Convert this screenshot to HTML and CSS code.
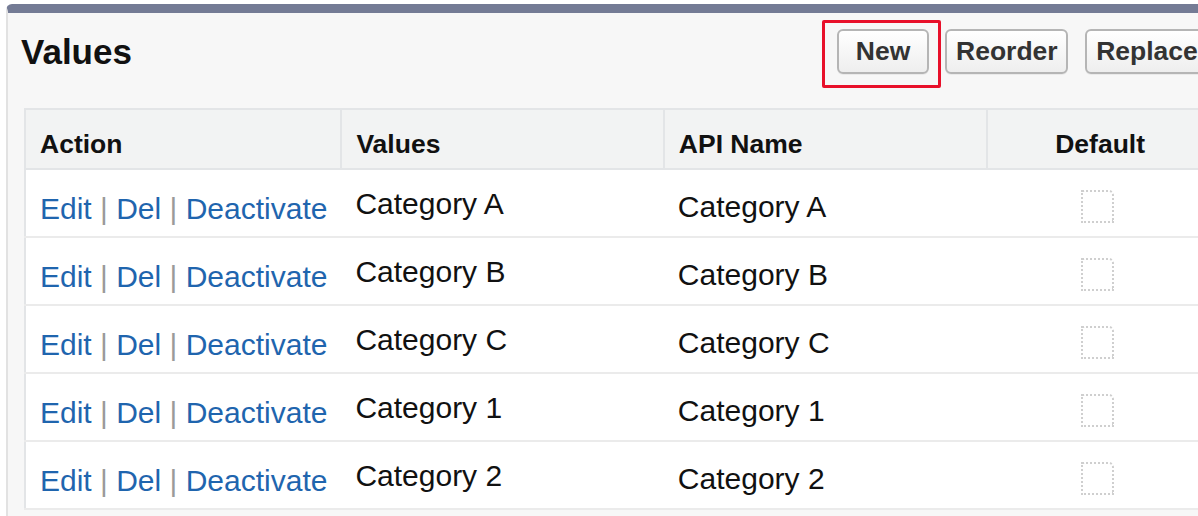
FILE: index.html
```html
<!DOCTYPE html>
<html lang="en">
<head>
<meta charset="utf-8">
<title>Values</title>
<link rel="stylesheet" href="styles.css">
</head>
<body>
<div class="panel">
  <div class="panel-header">
    <h2 class="title">Values</h2>
    <div class="buttons">
      <span class="highlight"><button class="btn btn-new" type="button">New</button></span>
      <button class="btn btn-reorder" type="button">Reorder</button>
      <button class="btn btn-replace" type="button">Replace</button>
    </div>
  </div>
  <table class="values-table">
    <thead>
      <tr>
        <th class="col-action">Action</th>
        <th class="col-values">Values</th>
        <th class="col-api">API Name</th>
        <th class="col-default">Default</th>
      </tr>
    </thead>
    <tbody>
      <tr>
        <td class="cell-action"><a href="#">Edit</a> <span class="sep">|</span> <a href="#">Del</a> <span class="sep">|</span> <a href="#">Deactivate</a></td>
        <td class="cell-values">Category A</td>
        <td class="cell-api">Category A</td>
        <td class="cell-default"><span class="checkbox"></span></td>
      </tr>
      <tr>
        <td class="cell-action"><a href="#">Edit</a> <span class="sep">|</span> <a href="#">Del</a> <span class="sep">|</span> <a href="#">Deactivate</a></td>
        <td class="cell-values">Category B</td>
        <td class="cell-api">Category B</td>
        <td class="cell-default"><span class="checkbox"></span></td>
      </tr>
      <tr>
        <td class="cell-action"><a href="#">Edit</a> <span class="sep">|</span> <a href="#">Del</a> <span class="sep">|</span> <a href="#">Deactivate</a></td>
        <td class="cell-values">Category C</td>
        <td class="cell-api">Category C</td>
        <td class="cell-default"><span class="checkbox"></span></td>
      </tr>
      <tr>
        <td class="cell-action"><a href="#">Edit</a> <span class="sep">|</span> <a href="#">Del</a> <span class="sep">|</span> <a href="#">Deactivate</a></td>
        <td class="cell-values">Category 1</td>
        <td class="cell-api">Category 1</td>
        <td class="cell-default"><span class="checkbox"></span></td>
      </tr>
      <tr>
        <td class="cell-action"><a href="#">Edit</a> <span class="sep">|</span> <a href="#">Del</a> <span class="sep">|</span> <a href="#">Deactivate</a></td>
        <td class="cell-values">Category 2</td>
        <td class="cell-api">Category 2</td>
        <td class="cell-default"><span class="checkbox"></span></td>
      </tr>
    </tbody>
  </table>
</div>
</body>
</html>
```
FILE: styles.css
```css
html, body {
  margin: 0;
  padding: 0;
  background: #ffffff;
  overflow: hidden;
  height: 516px;
}

body {
  font-family: "Liberation Sans", Arial, sans-serif;
  color: #111;
}

.panel {
  margin: 4px 0 0 6px;
  width: 1260px;
  min-height: 600px;
  background: #f7f7f7;
  border-top: 9px solid #747b95;
  border-left: 2px solid #e2e2e2;
  border-top-left-radius: 6px;
  box-sizing: border-box;
}

.panel-header {
  display: flex;
  align-items: flex-start;
  height: 95px;
  box-sizing: border-box;
  padding: 16px 0 0 13px;
}

.title {
  flex: 0 0 816px;
  margin: 5px 0 0 0;
  font-size: 35px;
  line-height: 1;
  font-weight: bold;
  color: #111;
}

.buttons {
  display: flex;
  gap: 16px;
  align-items: flex-start;
}

.highlight {
  position: relative;
  display: inline-flex;
}

.highlight::after {
  content: "";
  position: absolute;
  top: -9px;
  left: -15px;
  right: -12px;
  bottom: -14px;
  border: 3px solid #e8102a;
  border-radius: 2px;
  pointer-events: none;
}

.btn {
  height: 45px;
  box-sizing: border-box;
  border: 2px solid #b5b5b5;
  border-radius: 6px;
  background: linear-gradient(#ffffff, #eeeeee);
  font-family: "Liberation Sans", Arial, sans-serif;
  font-weight: bold;
  font-size: 26.5px;
  color: #333;
  padding: 0 9px;
  line-height: 1;
  box-shadow: 0 1px 0 rgba(0,0,0,0.05);
}

.btn-new {
  width: 92px;
}

.btn-reorder {
  width: 123px;
  margin-right: 1px;
}

.btn-replace {
  width: 124px;
}

.values-table {
  margin-left: 16px;
  border-collapse: collapse;
  table-layout: fixed;
  width: 1190px;
  background: #ffffff;
  border-top: 2px solid #e3e5e7;
  border-left: 2px solid #e3e5e7;
}

.col-action { width: 314px; }
.col-values { width: 320px; }
.col-api { width: 321px; }
.col-default { width: 224px; }

.values-table th {
  height: 60px;
  box-sizing: border-box;
  background: #f2f3f3;
  border-bottom: 2px solid #e3e5e7;
  border-right: 2px solid #e3e5e7;
  font-size: 26.5px;
  line-height: 1;
  font-weight: bold;
  color: #111;
  text-align: left;
  vertical-align: top;
  padding: 21px 0 0 14px;
}

.values-table th.col-default {
  text-align: center;
  padding-left: 0;
}

.values-table td {
  height: 68px;
  box-sizing: border-box;
  border-bottom: 2px solid #ebebeb;
  font-size: 30px;
  line-height: 1;
  vertical-align: top;
  padding: 0 0 0 14px;
  white-space: nowrap;
  color: #111;
}

.values-table td.cell-action {
  padding-top: 24px;
}

.values-table td.cell-values {
  padding-top: 19px;
}

.values-table td.cell-api {
  padding-top: 22px;
  padding-left: 14px;
}

.values-table td.cell-default {
  text-align: center;
  padding: 20px 0 0 0;
}

.cell-action a {
  color: #1f65ae;
  text-decoration: none;
}

.sep {
  color: #9a9a9a;
}

.checkbox {
  display: inline-block;
  width: 33px;
  height: 33px;
  box-sizing: border-box;
  border: 2px dotted #cfcfcf;
  border-top-right-radius: 5px;
  margin-left: -6px;
}
```
